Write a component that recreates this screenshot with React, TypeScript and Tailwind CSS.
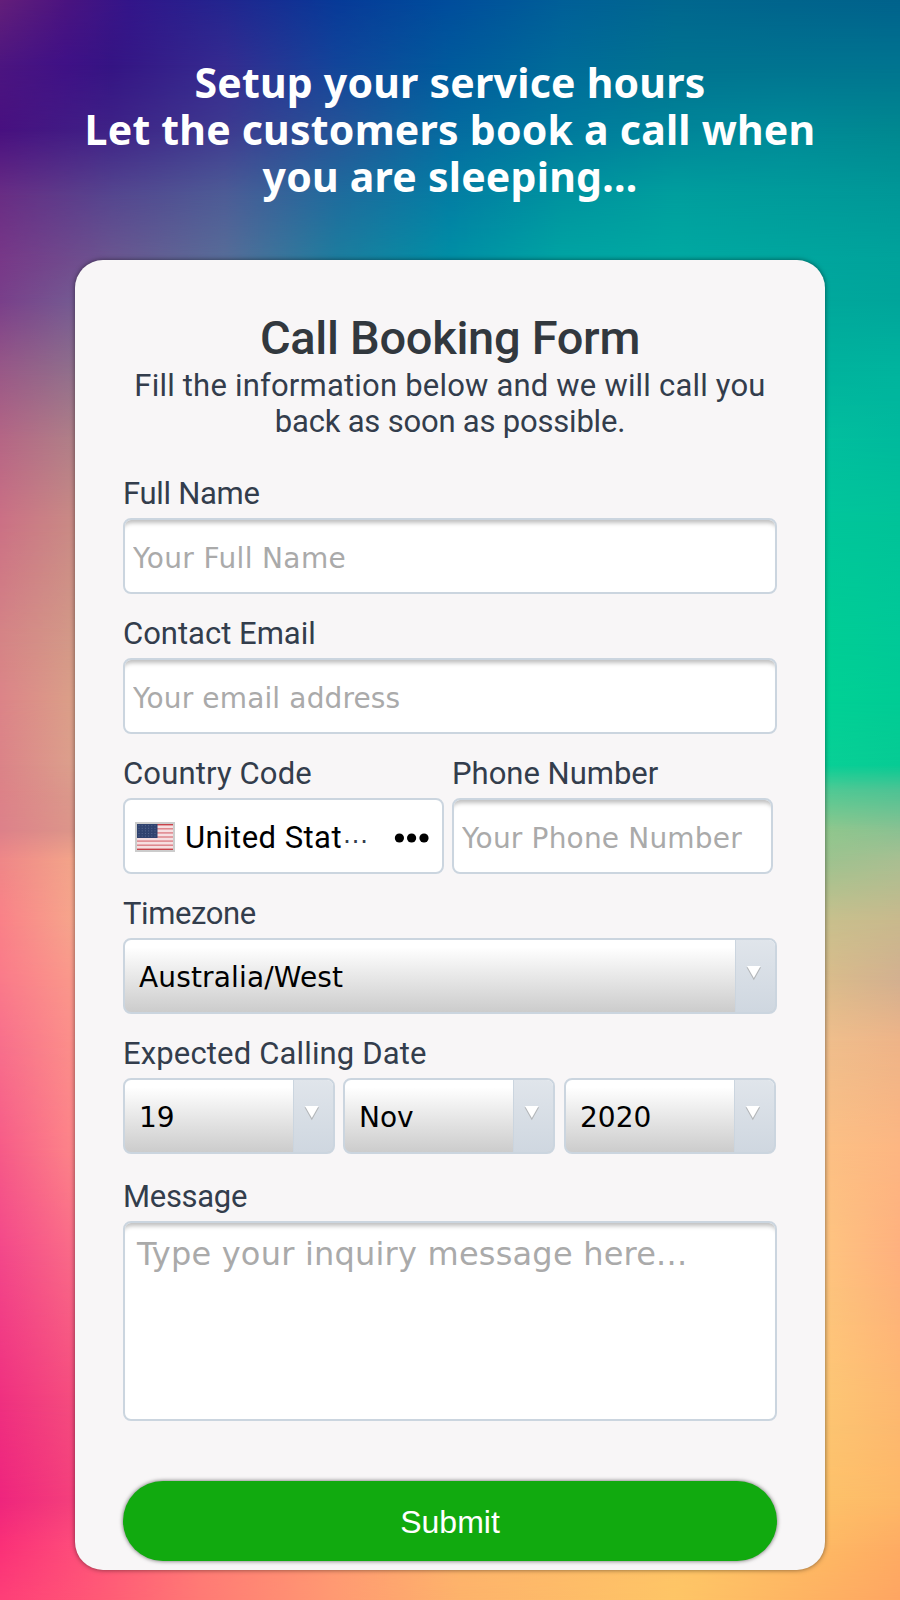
import React from "react";

type Band = { top: number; height: number; fill: string };

const MESH: { y: number; stops: string }[] = [
  { y: 0, stops: "#641f7a 0, #4b1480 65px, #33158a 130px, #22258f 225px, #073a98 337px, #004d9c 450px, #005f98 562px, #00678f 675px, #00648d 787px, #00628c 900px" },
  { y: 65, stops: "#4c1580 0, #3f1186 65px, #351484 112px, #352b90 225px, #12459a 337px, #005a9c 450px, #006b99 562px, #007390 675px, #007490 900px" },
  { y: 130, stops: "#481080 0, #3e2287 112px, #3e3a90 225px, #265397 337px, #056ba0 450px, #007a9e 562px, #008599 675px, #008a98 787px, #008890 900px" },
  { y: 195, stops: "#692d84 0, #55468f 112px, #4d5c96 225px, #1f6c9d 337px, #037ea4 450px, #00939f 562px, #009f9e 675px, #009898 900px" },
  { y: 260, stops: "#783888 0, #6b5690 112px, #576d98 225px, #1d7d9e 337px, #008fa5 450px, #00a4a3 562px, #00a9a2 675px, #00a39b 900px" },
  { y: 300, stops: "#793f8a 0, #745a92 75px, #00a89c 825px, #00a59b 900px" },
  { y: 370, stops: "#985887 0, #90708c 75px, #00b39d 825px, #00b49e 900px" },
  { y: 440, stops: "#b56685 0, #b08088 75px, #02bf9e 825px, #00ba9d 900px" },
  { y: 520, stops: "#cb7085 0, #c98b85 75px, #01c69b 825px, #01c399 900px" },
  { y: 640, stops: "#d58486 0, #d39a88 75px, #00ce95 825px, #00c998 900px" },
  { y: 700, stops: "#dc8488 0, #dba088 75px, #01d195 825px, #00cc95 900px" },
  { y: 765, stops: "#db8388 0, #dca08c 75px, #08d096 825px, #06cb94 900px" },
  { y: 790, stops: "#dc8288 0, #db9a8b 75px, #4fca94 825px, #4dc394 900px" },
  { y: 830, stops: "#dd818a 0, #dc968a 75px, #90c78d 825px, #8ac192 900px" },
  { y: 860, stops: "#ef8788 0, #f3a58a 75px, #9dc38f 825px, #a9bf92 900px" },
  { y: 920, stops: "#fa8188 0, #f6a68c 75px, #c8c08d 825px, #c9b98d 900px" },
  { y: 980, stops: "#fa7a8a 0, #fa998b 75px, #dabc8b 825px, #d3b090 900px" },
  { y: 1040, stops: "#f8708c 0, #fc908a 75px, #efbe8c 825px, #eeb488 900px" },
  { y: 1150, stops: "#f65b88 0, #fd8589 75px, #fcc084 825px, #fdb682 900px" },
  { y: 1250, stops: "#f3488a 0, #fa6c88 75px, #fec480 825px, #feb07e 900px" },
  { y: 1400, stops: "#ef3080 0, #f54d7e 75px, #fdc674 825px, #fdb871 900px" },
  { y: 1500, stops: "#ee257d 0, #f4407c 75px, #fdc169 825px, #fdb868 900px" },
  { y: 1545, stops: "#fa3078 0, #fe4c7b 75px, #ff7a75 200px, #ff9a72 337px, #fdb56b 460px, #fec566 700px, #feb964 825px, #feac63 900px" },
  { y: 1600, stops: "#fe3f78 0, #ff5a76 100px, #ff7a75 200px, #ff9a72 337px, #fdb26b 460px, #fec566 675px, #feb062 825px, #fea562 900px" },
];

const BANDS: Band[] = MESH.map((row, i) => {
  const top = i === 0 ? 0 : MESH[i - 1].y;
  return { top, height: row.y - top, fill: `linear-gradient(to right, ${row.stops})` };
});

function Backdrop() {
  return (
    <div className="absolute inset-0">
      {BANDS.map((b, i) => (
        <div
          key={i}
          className="absolute inset-x-0 bottom-0"
          style={{
            top: b.top,
            background: b.fill,
            maskImage: i === 0 ? "none" : `linear-gradient(transparent, black ${b.height}px)`,
          }}
        />
      ))}
    </div>
  );
}

function Label({ children, className = "" }: { children: React.ReactNode; className?: string }) {
  return (
    <label className={`mb-1.5 block h-9 text-[31px] leading-9 whitespace-nowrap text-[#333d4c] ${className}`}>
      {children}
    </label>
  );
}

const inputClass =
  "block h-[76px] w-full rounded-lg border-2 border-[#cbd5df] bg-white pt-[5px] pl-2 font-['DejaVu_Sans',sans-serif] text-[28px] text-black shadow-[inset_0_7px_4px_-4px_rgba(0,0,0,0.25)] outline-none placeholder:text-[#aaaaaa] placeholder:opacity-100";

function SelectBox({ value, className = "" }: { value: string; className?: string }) {
  return (
    <div className={`flex h-[76px] overflow-hidden rounded-lg border-2 border-[#cbd5df] bg-linear-to-b from-white from-10% to-[#cccccc] ${className}`}>
      <div className="flex-1 pt-px pl-3.5 font-['DejaVu_Sans',sans-serif] text-[28px] leading-[74px] whitespace-nowrap text-black">
        {value}
      </div>
      <div className="w-10 border-l border-[#cbd5df] bg-linear-to-b from-[#e0e5eb] to-[#cfd7e0] pt-[26px] pl-[10px]">
        <svg width="16" height="16" viewBox="0 0 16 16">
          <path d="M0.5 1.2h14.6L7.8 14.2z" fill="#b3b6b9" />
          <path d="M1 0h13.6L7.8 12z" fill="#ffffff" />
        </svg>
      </div>
    </div>
  );
}

function Flag() {
  return (
    <svg width="40" height="30" viewBox="0 0 40 30" className="shrink-0">
      <rect width="40" height="30" fill="#cccccc" />
      <rect x="2" y="2" width="36" height="26" fill="#f6dfe1" />
      {[0, 1, 2, 3, 4, 5, 6].map((i) => (
        <rect key={i} x="2" y={2 + i * 4.1} width="36" height="1.4" fill={i === 0 || i === 6 ? "#c8424a" : "#dc7f86"} />
      ))}
      <rect x="2" y="2" width="20.5" height="14" fill="#2f426f" />
      {[0, 1, 2, 3, 4].map((r) =>
        [0, 1, 2, 3, 4, 5].map((c) => (
          <rect key={`${r}-${c}`} x={3.5 + c * 3.2} y={3.2 + r * 2.6} width="1" height="1" fill="#5b6c93" />
        )),
      )}
    </svg>
  );
}

export default function App() {
  return (
    <div className="relative h-[1600px] w-[900px] overflow-hidden font-[Roboto,sans-serif]">
      <Backdrop />
      <div className="relative flex flex-col items-center pt-[59px]">
        <h1 className="text-center font-['Noto_Sans',sans-serif] text-[41px] leading-[47px] font-bold tracking-[0.22px] whitespace-nowrap text-white">
          Setup your service hours
          <br />
          Let the customers book a call when
          <br />
          you are sleeping...
        </h1>

        <div className="mt-[60px] h-[1310px] w-[750px] rounded-[28px] bg-[#f8f6f7] px-12 pt-[50px] shadow-[0_0_5px_rgba(0,0,0,0.5)]">
          <h2 className="h-[58px] text-center text-[47px] leading-14 font-medium tracking-[-0.3px] text-[#32383e]">
            Call Booking Form
          </h2>
          <p className="text-center text-[31px] leading-9 whitespace-nowrap text-[#333d4c]">
            <span className="tracking-[0.2px]">Fill the information below and we will call you</span>
            <br />
            <span className="tracking-[-0.2px]">back as soon as possible.</span>
          </p>

          <form className="mt-9">
            <Label className="tracking-[-0.3px]">Full Name</Label>
            <input className={`${inputClass} tracking-[0.36px]`} placeholder="Your Full Name" />

            <Label className="mt-[22px]">Contact Email</Label>
            <input className={`${inputClass} tracking-[0.14px]`} placeholder="Your email address" />

            <div className="mt-[22px] flex gap-2">
              <div className="w-[321px]">
                <Label className="tracking-[0.15px]">Country Code</Label>
                <div className="flex h-[76px] items-center rounded-lg border-2 border-[#cbd5df] bg-white pt-1 pl-2.5">
                  <div className="-mt-1.5 flex items-center pt-1">
                    <Flag />
                  </div>
                  <span className="ml-2.5 text-[31px] leading-9 tracking-[0.45px] text-black">United Stat</span>
                  <span className="-translate-y-1 font-['Liberation_Sans',sans-serif] text-[27px] leading-9 text-[#333d4c]">…</span>
                  <svg width="36" height="10" viewBox="0 0 36 10" className="mr-3 ml-auto">
                    <circle cx="5.4" cy="5" r="4.6" />
                    <circle cx="17.6" cy="5" r="4.6" />
                    <circle cx="30" cy="5" r="4.6" />
                  </svg>
                </div>
              </div>
              <div className="w-[321px]">
                <Label>Phone Number</Label>
                <input className={`${inputClass} tracking-[0.18px]`} placeholder="Your Phone Number" />
              </div>
            </div>

            <Label className="mt-[22px] tracking-[-0.4px]">Timezone</Label>
            <SelectBox value="Australia/West" className="tracking-[0.15px]" />

            <Label className="mt-[22px] tracking-[0.15px]">Expected Calling Date</Label>
            <div className="flex">
              <SelectBox value="19" className="w-[212px]" />
              <SelectBox value="Nov" className="ml-2 w-[212px]" />
              <SelectBox value="2020" className="ml-[9px] w-[212px]" />
            </div>

            <Label className="mt-[25px] tracking-[-0.3px]">Message</Label>
            <textarea
              className="block h-[200px] w-full resize-none rounded-lg border-2 border-[#cbd5df] bg-white px-3 pt-3 font-['DejaVu_Sans',sans-serif] text-[32px] leading-[38px] tracking-[0.21px] shadow-[inset_0_7px_4px_-4px_rgba(0,0,0,0.25)] outline-none placeholder:text-[#aaaaaa] placeholder:opacity-100"
              placeholder="Type your inquiry message here..."
            />

            <button
              type="button"
              className="mt-[60px] block h-20 w-full rounded-full bg-[#11aa0f] pt-0.5 font-['Liberation_Sans',sans-serif] text-[32px] text-white shadow-[0_0_4px_rgba(0,0,0,0.6)]"
            >
              Submit
            </button>
          </form>
        </div>
      </div>
    </div>
  );
}
